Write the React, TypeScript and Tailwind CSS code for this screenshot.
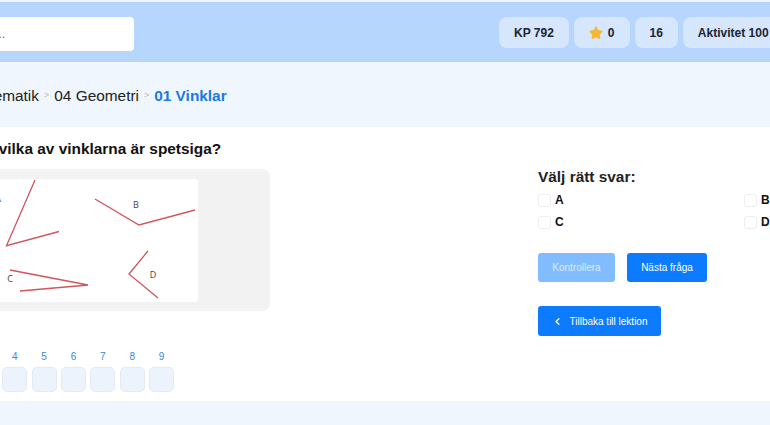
import React from 'react';
import { ChevronLeft, Star } from 'lucide-react';

const stats = ['KP 792', 'star', '16', 'Aktivitet 100'];
const options = ['A', 'B', 'C', 'D'];
const numbers = [1, 2, 3, 4, 5, 6, 7, 8, 9];

const StatChip = ({ label }: { label: string }) => (
    <div className="flex h-[31px] shrink-0 items-center gap-[5px] whitespace-nowrap rounded-lg bg-[#d5e6fd] px-[15px] text-xs font-bold text-[#1a2433]">
        {label === 'star' ? (
            <>
                <Star className="h-[14px] w-[14px] fill-[#f5b82e] text-[#f5b82e]" strokeWidth={2} />
                <span>0</span>
            </>
        ) : (
            label
        )}
    </div>
);

const AnglesPicture = () => (
    <svg viewBox="-80 179 278 123" className="block h-[123px] w-[278px] rounded-sm bg-white">
        <g fill="none" stroke="#d2545c" strokeWidth="1.3">
            <polyline points="35,180 6.5,245.7 59,231.5" />
            <polyline points="95,199 139,225 195,210" />
            <polyline points="10,270 88,285 20,291" />
            <polyline points="148,251 129,274 158,298" />
        </g>
        <g fill="#444" fontSize="9" fontFamily="Open Sans, sans-serif" textAnchor="middle">
            <text x="-2" y="202">A</text>
            <text x="136" y="208">B</text>
            <text x="10" y="282">C</text>
            <text x="153" y="278">D</text>
        </g>
    </svg>
);

export default function App() {
    return (
        <div className="h-[425px] w-[770px] overflow-hidden bg-[#f0f6fe] pt-[2px] font-['Liberation_Sans',sans-serif]">
            <div className="-ml-[90px] w-[900px]">
                <header className="flex h-[60px] items-start bg-[#b6d6fd] pt-[15px]">
                    <div className="flex h-[34px] w-[224px] items-center justify-end rounded-sm bg-white pr-[129px] text-xs text-[#555]">
                        Sök...
                    </div>
                    <div className="ml-[365px] flex gap-[5px]">
                        {stats.map(s => (
                            <StatChip key={s} label={s} />
                        ))}
                    </div>
                </header>

                <nav className="flex h-[65px] items-center gap-[5px] pt-[2px] pl-[58px] text-[15.4px] text-[#222]">
                    <span>Matematik</span>
                    <span className="text-[9px] text-[#bbb]">&gt;</span>
                    <span>04 Geometri</span>
                    <span className="text-[9px] text-[#bbb]">&gt;</span>
                    <span className="font-bold text-[#1a7ae0]">01 Vinklar</span>
                </nav>

                <main className="flex h-[274px] bg-white">
                    <section className="w-[628px] pt-[12px]">
                        <h2 className="pl-[46px] text-[15.4px] leading-[20px] font-bold text-[#111]">Ange vilka av vinklarna är spetsiga?</h2>
                        <div className="mt-[10px] w-[360px] rounded-lg bg-[#f2f2f2] pt-[10px] pb-[9px] pl-[10px]">
                            <AnglesPicture />
                        </div>
                        <div className="mt-[40px] ml-[4px] flex gap-[4.4px]">
                            {numbers.map(n => (
                                <div key={n} className="w-[25px] text-center">
                                    <div className="text-[10px] leading-[12px] text-[#3c86d8]">{n}</div>
                                    <div className="mt-[4px] h-[25px] rounded-[5px] border border-[#e3eaf4] bg-[#edf3fd]" />
                                </div>
                            ))}
                        </div>
                    </section>

                    <section className="pt-[40px]">
                        <h3 className="text-[15.4px] leading-[19px] font-bold text-[#222]">Välj rätt svar:</h3>
                        <div className="mt-[8px] grid w-[240px] grid-cols-[206px_1fr] gap-y-[10px]">
                            {options.map(o => (
                                <label key={o} className="flex h-[12px] items-center gap-[4px] text-xs font-bold text-[#111]">
                                    <span className="h-[13px] w-[13px] rounded-[3px] border border-[#eeeeee] bg-white" />
                                    {o}
                                </label>
                            ))}
                        </div>
                        <div className="mt-[25px] flex gap-[12px]">
                            <button className="h-[29px] w-[77px] rounded-[3px] bg-[#80bcff] text-[10px] text-[#dcecff]">Kontrollera</button>
                            <button className="h-[29px] w-[80px] rounded-[3px] bg-[#0d7bff] text-[10px] text-white">Nästa fråga</button>
                        </div>
                        <button className="mt-[24px] flex h-[30px] w-[123px] items-center justify-center gap-[7px] rounded-[3px] bg-[#0d7bff] text-[10px] text-white">
                            <ChevronLeft className="h-[11px] w-[11px]" strokeWidth={3} />
                            Tillbaka till lektion
                        </button>
                    </section>
                </main>
            </div>
        </div>
    );
}
